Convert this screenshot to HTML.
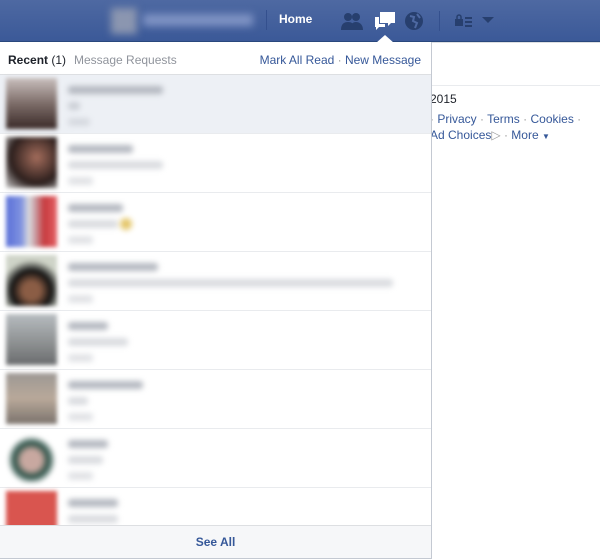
<!DOCTYPE html><html><head><style>
*{margin:0;padding:0;box-sizing:border-box}
body{width:600px;height:559px;overflow:hidden;background:#fff;font-family:"Liberation Sans",Helvetica,sans-serif;position:relative}
.hd{position:absolute;left:0;top:0;width:600px;height:42px;background:linear-gradient(#4e69a2,#3b5998);border-bottom:1px solid #29487d}
.bl{filter:blur(3px);position:absolute}
.pn{position:absolute;left:0;top:42px;width:432px;height:517px;background:#fff;border-right:1px solid #c4c9d2;border-bottom:1px solid #c4c9d2}
.row{position:absolute;left:0;width:431px;height:59px;border-bottom:1px solid #e9ebee}
.av{position:absolute;left:6px;top:3px;width:51px;height:51px;filter:blur(2px)}
.t{position:absolute;background:#b4b8c0;filter:blur(3px);height:8px;border-radius:3px}
.rt{position:absolute;font-size:12px;color:#365899}
</style></head><body>
<div class="hd">
<div class="bl" style="left:111px;top:8px;width:26px;height:26px;background:#8b96b0;filter:blur(4px)"></div>
<div class="bl" style="left:143px;top:14px;width:110px;height:12px;background:#7f93c4;filter:blur(4px)"></div>
<div style="position:absolute;left:266px;top:10px;width:1px;height:20px;background:#34508e"></div>
<div style="position:absolute;left:279px;top:12px;color:#fff;font-weight:bold;font-size:12px">Home</div>
<svg style="position:absolute;left:340px;top:11px" width="24" height="20"><g fill="#273f6e"><circle cx="8" cy="6" r="4"/><circle cx="16" cy="6" r="4"/><path d="M1 19c0-6 3-8 7-8s7 2 7 8zM10 19c0-6 3-8 6-8s7 2 7 8z"/></g></svg>
<svg style="position:absolute;left:373px;top:10px" width="24" height="22"><path d="M7 2h15v11h-4l-3 3v-3h-8z" fill="#fff"/><path d="M2 7h4v7h6v3h-6l-3 3v-3h-1z" fill="#fff"/></svg>
<svg style="position:absolute;left:404px;top:11px" width="20" height="20"><circle cx="10" cy="10" r="9" fill="#273f6e"/><path d="M6 5l4 1-1 4 4 2-2 5M13 3l3 4" stroke="#4e69a2" stroke-width="2" fill="none"/></svg>
<div style="position:absolute;left:439px;top:11px;width:1px;height:20px;background:#34508e"></div>
<svg style="position:absolute;left:454px;top:14px" width="20" height="14"><g fill="#273f6e"><rect x="1" y="5" width="8" height="7"/><path d="M3 5v-2a2 2 0 0 1 4 0v2" stroke="#273f6e" fill="none" stroke-width="1.5"/><rect x="11" y="3" width="7" height="2"/><rect x="11" y="7" width="7" height="2"/><rect x="11" y="11" width="7" height="2"/></g></svg>
<svg style="position:absolute;left:482px;top:17px" width="12" height="7"><path d="M0 0h12l-6 6z" fill="#273f6e"/></svg>
</div>
<svg style="position:absolute;left:376px;top:35px;z-index:3" width="20" height="9"><path d="M0 8l9-8 9 8z" fill="#fff"/></svg>
<div style="position:absolute;left:432px;top:42px;width:168px;height:1px;background:#dddfe2"></div>
<div style="position:absolute;left:432px;top:85px;width:168px;height:1px;background:#e9ebee"></div>
<div style="position:absolute;left:430px;top:92px;font-size:12px;color:#1d2129">2015</div>
<div class="rt" style="left:430px;top:112px"><span style="color:#999">·</span> Privacy <span style="color:#999">·</span> Terms <span style="color:#999">·</span> Cookies <span style="color:#999">·</span></div>
<div class="rt" style="left:430px;top:128px">Ad Choices<span style="color:#999">▷ ·</span> More <span style="font-size:8px">▼</span></div>
<div class="pn">
<div style="position:absolute;left:8px;top:11px;font-size:12px;color:#1d2129;font-weight:bold">Recent <span style="font-weight:normal">(1)</span></div>
<div style="position:absolute;left:74px;top:11px;font-size:12px;color:#90949c">Message Requests</div>
<div style="position:absolute;right:10px;top:11px;font-size:12px;color:#365899">Mark All Read <span style="color:#999">·</span> New Message</div>
<div style="position:absolute;left:0;top:32px;width:431px;height:1px;background:#dddfe2"></div>
<div class="row" style="top:33px;background:#edf0f5"><div class="av" style="background:linear-gradient(#c9bfbd,#7d6d69 50%,#3a2a28)"></div><div class="t" style="left:68px;top:11px;width:95px"></div><div class="t" style="left:68px;top:27px;width:12px;opacity:.6"></div><div class="t" style="left:68px;top:43px;width:22px;opacity:.4"></div></div>
<div class="row" style="top:92px"><div class="av" style="background:radial-gradient(circle at 60% 40%,#a46d5c,#2b1e1c 60%,#ccc)"></div><div class="t" style="left:68px;top:11px;width:65px"></div><div class="t" style="left:68px;top:27px;width:95px;opacity:.5"></div><div class="t" style="left:68px;top:43px;width:25px;opacity:.4"></div></div>
<div class="row" style="top:151px"><div class="av" style="background:linear-gradient(90deg,#5a70d8,#7f92e0 30%,#ddd 45%,#c9aab0 55%,#c63a3e 75%,#e56266)"></div><div class="t" style="left:68px;top:11px;width:55px"></div><div class="t" style="left:68px;top:27px;width:50px;opacity:.5"></div><div class="t" style="left:120px;top:25px;width:12px;height:12px;background:#e4c66a;border-radius:6px"></div><div class="t" style="left:68px;top:43px;width:25px;opacity:.4"></div></div>
<div class="row" style="top:210px"><div class="av" style="background:radial-gradient(circle at 50% 70%,#8b5d45 20%,#111 45%,#cfd4c8 70%)"></div><div class="t" style="left:68px;top:11px;width:90px"></div><div class="t" style="left:68px;top:27px;width:325px;opacity:.5"></div><div class="t" style="left:68px;top:43px;width:25px;opacity:.4"></div></div>
<div class="row" style="top:269px"><div class="av" style="background:linear-gradient(#b7bcc0,#8b8e8f 60%,#6a6c6e)"></div><div class="t" style="left:68px;top:11px;width:40px"></div><div class="t" style="left:68px;top:27px;width:60px;opacity:.5"></div><div class="t" style="left:68px;top:43px;width:25px;opacity:.4"></div></div>
<div class="row" style="top:328px"><div class="av" style="background:linear-gradient(#9d9894,#b9a99a 50%,#7b736d)"></div><div class="t" style="left:68px;top:11px;width:75px"></div><div class="t" style="left:68px;top:27px;width:20px;opacity:.5"></div><div class="t" style="left:68px;top:43px;width:25px;opacity:.4"></div></div>
<div class="row" style="top:387px"><div class="av" style="background:radial-gradient(circle at 50% 55%,#c8a8a0 25%,#2d5248 45%,#fff 65%)"></div><div class="t" style="left:68px;top:11px;width:40px"></div><div class="t" style="left:68px;top:27px;width:35px;opacity:.5"></div><div class="t" style="left:68px;top:43px;width:25px;opacity:.4"></div></div>
<div class="row" style="top:446px;border:none"><div class="av" style="background:#d9554f"></div><div class="t" style="left:68px;top:11px;width:50px"></div><div class="t" style="left:68px;top:27px;width:50px;opacity:.5"></div></div>
<div style="position:absolute;left:0;top:483px;width:431px;height:33px;background:#f6f7f9;border-top:1px solid #dddfe2;text-align:center;font-size:12px;font-weight:bold;color:#365899;line-height:32px">See All</div>
</div>
</body></html>
